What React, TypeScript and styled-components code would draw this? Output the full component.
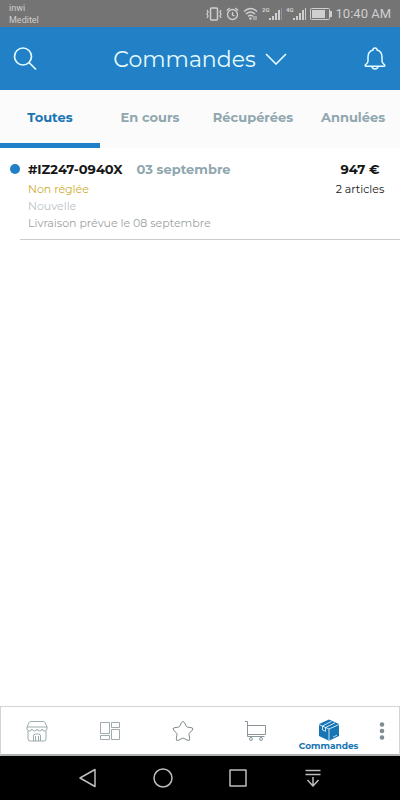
import React, { useState } from "react";
import styled, { createGlobalStyle } from "styled-components";

const blue = "#2280c6";
const muted = "#91a7af";

const GlobalStyle = createGlobalStyle`
  * { box-sizing: border-box; }
  body { margin: 0; background: #fff; font-family: Montserrat, Inter, sans-serif; }
  button { border: 0; padding: 0; margin: 0; background: none; font: inherit; color: inherit; cursor: pointer; }
  svg { display: block; }
`;

const Screen = styled.div`
  display: flex;
  flex-direction: column;
  min-height: 100vh;
`;

const StatusBar = styled.div`
  display: flex;
  align-items: center;
  justify-content: space-between;
  height: 27px;
  padding: 0 9px;
  background: #747474;
  color: #cfcfcf;
  font-family: Roboto, sans-serif;
`;

const Carriers = styled.div`
  font-size: 9px;
  line-height: 12px;
`;

const StatusIcons = styled.div`
  display: flex;
  align-items: center;
  gap: 4px;
`;

const Clock = styled.time`
  font-size: 13px;
  line-height: 20px;
  white-space: nowrap;
`;

const Header = styled.header`
  display: flex;
  align-items: center;
  justify-content: space-between;
  height: 63px;
  padding: 0 12px;
  background: ${blue};
  color: #e4fbff;
`;

const IconButton = styled.button`
  display: grid;
  place-items: center;
  width: 26px;
  height: 32px;
`;

const TitleButton = styled.button`
  display: flex;
  align-items: center;
  gap: 9px;
`;

const Title = styled.h1`
  margin: 0;
  padding-top: 2px;
  font-size: 22px;
  line-height: 32px;
  font-weight: 400;
`;

const Tabs = styled.div`
  display: grid;
  grid-template-columns: 100fr 100fr 106fr 94fr;
  height: 58px;
  background: #fbfbfb;
`;

const Tab = styled.button<{ $active: boolean }>`
  border-bottom: 5px solid ${(p) => (p.$active ? blue : "transparent")};
  color: ${(p) => (p.$active ? "#1874b5" : muted)};
  font-size: 13px;
  line-height: 20px;
  font-weight: 700;
  white-space: nowrap;
`;

const Orders = styled.main`
  flex: 1;
  background: #fff;
`;

const Order = styled.article`
  display: grid;
  grid-template-columns: 8px 1fr 80px;
  margin-left: 20px;
  padding: 11px 0 7px;
  border-bottom: 1px solid #cbcbcb;
`;

const Dot = styled.span`
  width: 10px;
  height: 10px;
  margin: 5px 0 0 -10px;
  border-radius: 50%;
  background: ${blue};
`;

const OrderHeading = styled.div`
  display: flex;
  gap: 14px;
  margin-bottom: 2px;
  font-size: 13px;
  line-height: 20px;
  font-weight: 700;
  white-space: nowrap;
`;

const OrderNumber = styled.span`
  color: #171717;
`;

const OrderDate = styled.time`
  color: ${muted};
`;

const Line = styled.div<{ $color: string }>`
  color: ${(p) => p.$color};
  font-size: 11px;
  line-height: 17px;
`;

const Totals = styled.div`
  text-align: center;
  color: #171717;
`;

const Price = styled.div`
  margin-bottom: 2px;
  font-size: 13px;
  line-height: 20px;
  font-weight: 700;
`;

const Count = styled.div`
  font-size: 11px;
  line-height: 17px;
`;

const BottomNav = styled.nav`
  display: grid;
  grid-template-columns: repeat(5, 1fr) 34px;
  height: 50px;
  border: 1px solid #d3d3d3;
  border-bottom: 2px solid #aeb2b3;
  background: #fff;
`;

const NavItem = styled.button<{ $active?: boolean }>`
  display: flex;
  flex-direction: column;
  align-items: center;
  justify-content: ${(p) => (p.$active ? "flex-end" : "center")};
  padding-bottom: ${(p) => (p.$active ? "3px" : "0")};
  color: ${(p) => (p.$active ? "#1676b5" : "#93a1a6")};
`;

const NavLabel = styled.span`
  font-size: 9px;
  line-height: 10px;
  font-weight: 700;
`;

const SystemNav = styled.nav`
  display: flex;
  justify-content: center;
  align-items: center;
  gap: 51px;
  height: 44px;
  background: #000;
  color: #bdbdbd;
`;

const SystemButton = styled.button`
  display: grid;
  place-items: center;
  width: 24px;
  height: 32px;
`;

const Signal = ({ label, faded }: { label: string; faded?: boolean }) => (
  <svg width="20" height="16" viewBox="0 0 20 16" fill="currentColor">
    <text x="0" y="6" fontSize="6" fontWeight="700">{label}</text>
    <path d="M7 12h2v2H7zM10 10h2v4h-2zM13 7h2v7h-2z" />
    <path d="M16 4h2v10h-2z" />
    <path d="M19 2h1v12h-1z" opacity={faded ? 0.35 : 1} />
  </svg>
);

const Vibrate = () => (
  <svg width="16" height="14" viewBox="0 0 16 14" fill="none" stroke="currentColor">
    <rect x="4.500" y="1" width="7" height="12" rx="1" strokeWidth="1.500" />
    <path d="M1 3l1 2-1 2 1 2-1 2M15 3l-1 2 1 2-1 2 1 2" strokeWidth="1.300" />
  </svg>
);

const Alarm = () => (
  <svg width="13" height="14" viewBox="0 0 13 14" fill="none" stroke="currentColor" strokeWidth="1.300">
    <circle cx="6.500" cy="7.500" r="5" />
    <path d="M.8 3.500L3.800 1M12.200 3.500L9.200 1M6.500 5v3l2 1" />
  </svg>
);

const Wifi = () => (
  <svg width="15" height="13" viewBox="0 0 15 13" fill="none" stroke="currentColor" strokeWidth="1.500">
    <path d="M1 4.500Q7.500-1.500 14 4.500M3 7q4.500-4 9 0M5 9.300q2.500-2 5 0" />
    <circle cx="7.500" cy="11.500" r="1.200" fill="currentColor" stroke="none" />
    <path d="M11 9v4M13 9v4" strokeWidth="1" />
  </svg>
);

const Battery = () => (
  <svg width="22" height="12" viewBox="0 0 22 12" fill="none" stroke="currentColor">
    <rect x=".5" y=".5" width="19" height="11" rx="1" />
    <path d="M2 2h13v8H2zM20 3h2v6h-2z" fill="currentColor" stroke="none" />
  </svg>
);

const Search = () => (
  <svg width="24" height="24" viewBox="0 0 24 24" fill="none" stroke="currentColor" strokeWidth="1.700">
    <circle cx="10" cy="9.500" r="8.500" />
    <path d="M16 15.500L23 22.500" />
  </svg>
);

const Chevron = () => (
  <svg width="22" height="12" viewBox="0 0 22 12" fill="none" stroke="currentColor" strokeWidth="1.600">
    <path d="M1 1l10 10L21 1" />
  </svg>
);

const Bell = () => (
  <svg width="22" height="24" viewBox="0 0 22 24" fill="none" stroke="currentColor" strokeWidth="1.500" strokeLinejoin="round">
    <path d="M9 3a2 2 0 0 1 4 0c3 .8 5 3.500 5 7v4c0 2 .8 2.600 2.500 3.800.7.600.4 1.400-.5 1.400H2c-.9 0-1.200-.8-.5-1.400C3.200 16.600 4 16 4 14v-4c0-3.500 2-6.200 5-7zM8 19.500c.3 3.300 5.700 3.300 6 0" />
  </svg>
);

const Shop = () => (
  <svg width="22" height="22" viewBox="0 0 22 22" fill="none" stroke="currentColor" strokeWidth=".9">
    <path d="M5 1.500h12q1.500 0 2 1L21 7H1l2-4.500q.5-1 2-1zM1 7v2q.5 2 2.500 2T6 9q.4 2 2.500 2T11 9q.4 2 2.500 2T16 9q.4 2 2.500 2T21 9V7M2 11v8q0 2 2 2h14q2 0 2-2v-8M7.500 21v-5q0-2 2-2h3q2 0 2 2v5M9.500 21v-5M12.500 21v-5" />
  </svg>
);

const Board = () => (
  <svg width="22" height="20" viewBox="0 0 22 20" fill="none" stroke="currentColor" strokeWidth=".9">
    <path d="M1.500 1.500h9v11h-9zM12.500 1.500h8v5h-8zM1.500 14.500h9v4h-9zM12.500 8.500h8v10h-8z" />
  </svg>
);

const Star = () => (
  <svg width="22" height="22" viewBox="0 0 22 22" fill="none" stroke="#70797c" strokeWidth=".9" strokeLinejoin="round">
    <path d="M9.600 2.500q1.400-2.200 2.800 0l1.800 3.700q.4.800 1.300.9l3.500.5q3 .5 1.400 2.400l-3 3.300q-.5.600-.4 1.300l.7 4q.2 2.700-2.100 1.700l-3.700-1.900q-.9-.4-1.800 0l-3.700 1.900q-2.300 1-2.100-1.700l.7-4q.1-.7-.4-1.300l-3-3.300Q0 8.100 3 7.600l3.500-.5q.9-.1 1.300-.9z" />
  </svg>
);

const Cart = () => (
  <svg width="22" height="22" viewBox="0 0 22 22" fill="none" stroke="#7d898e" strokeWidth=".9">
    <path d="M0 1.500h2.500v15h17M2.500 5.500h18v9h-18" />
    <circle cx="6" cy="19" r="1.500" />
    <circle cx="16" cy="19" r="1.500" />
  </svg>
);

const Parcel = () => (
  <svg width="22" height="22" viewBox="0 0 22 22" fill="currentColor">
    <path d="M11 .5L21 5v12l-10 4.800L1 17V5z" />
    <path d="M1 5.500l10 4.500 10-4.500M11 10v11.500M4.500 7v4l3 1.300V8.500L17 3.800M4.500 7L13.500 2.300" fill="none" stroke="#fff" strokeWidth=".8" />
    <path d="M15 18l4-1.800" stroke="#fff" strokeWidth=".7" />
  </svg>
);

const Dots = () => (
  <svg width="6" height="18" viewBox="0 0 6 18" fill="#7f8d92">
    <circle cx="3" cy="2.500" r="2.300" />
    <circle cx="3" cy="9" r="2.300" />
    <circle cx="3" cy="15.500" r="2.300" />
  </svg>
);

const SystemIcon = ({ d }: { d: string }) => (
  <svg width="20" height="20" viewBox="0 0 20 20" fill="none" stroke="currentColor" strokeWidth="1.500" strokeLinejoin="round">
    <path d={d} />
  </svg>
);

const tabs = ["Toutes", "En cours", "Récupérées", "Annulées"];

const navItems = [
  { label: "Boutique", icon: <Shop /> },
  { label: "Catalogue", icon: <Board /> },
  { label: "Favoris", icon: <Star /> },
  { label: "Panier", icon: <Cart /> },
];

const systemItems = [
  { label: "Retour", d: "M17 1.500v17L2 10z" },
  { label: "Accueil", d: "M10 1a9 9 0 1 1 0 18 9 9 0 0 1 0-18z" },
  { label: "Récents", d: "M2 2h16v16H2z" },
  { label: "Notifications", d: "M2.500 2.500h15M2.500 6.500h15M10 9v9M4.500 12l5.500 6 5.500-6" },
];

export default function App() {
  const [active, setActive] = useState(0);
  return (
    <Screen>
      <GlobalStyle />
      <StatusBar>
        <Carriers>
          <div>inwi</div>
          <div>Meditel</div>
        </Carriers>
        <StatusIcons>
          <Vibrate />
          <Alarm />
          <Wifi />
          <Signal label="2G" faded />
          <Signal label="4G" />
          <Battery />
          <Clock>10:40 AM</Clock>
        </StatusIcons>
      </StatusBar>
      <Header>
        <IconButton aria-label="Rechercher"><Search /></IconButton>
        <TitleButton>
          <Title>Commandes</Title>
          <Chevron />
        </TitleButton>
        <IconButton aria-label="Notifications"><Bell /></IconButton>
      </Header>
      <Tabs role="tablist">
        {tabs.map((tab, i) => (
          <Tab key={tab} role="tab" aria-selected={i === active} $active={i === active} onClick={() => setActive(i)}>
            {tab}
          </Tab>
        ))}
      </Tabs>
      <Orders>
        <Order>
          <Dot />
          <div>
            <OrderHeading>
              <OrderNumber>#IZ247-0940X</OrderNumber>
              <OrderDate>03 septembre</OrderDate>
            </OrderHeading>
            <Line $color="#ccab2e">Non réglée</Line>
            <Line $color="#b9bfc5">Nouvelle</Line>
            <Line $color="#9b9fa3">Livraison prévue le 08 septembre</Line>
          </div>
          <Totals>
            <Price>947 €</Price>
            <Count>2 articles</Count>
          </Totals>
        </Order>
      </Orders>
      <BottomNav>
        {navItems.map((item) => (
          <NavItem key={item.label} aria-label={item.label}>{item.icon}</NavItem>
        ))}
        <NavItem $active>
          <Parcel />
          <NavLabel>Commandes</NavLabel>
        </NavItem>
        <NavItem aria-label="Plus"><Dots /></NavItem>
      </BottomNav>
      <SystemNav>
        {systemItems.map((item) => (
          <SystemButton key={item.label} aria-label={item.label}>
            <SystemIcon d={item.d} />
          </SystemButton>
        ))}
      </SystemNav>
    </Screen>
  );
}
